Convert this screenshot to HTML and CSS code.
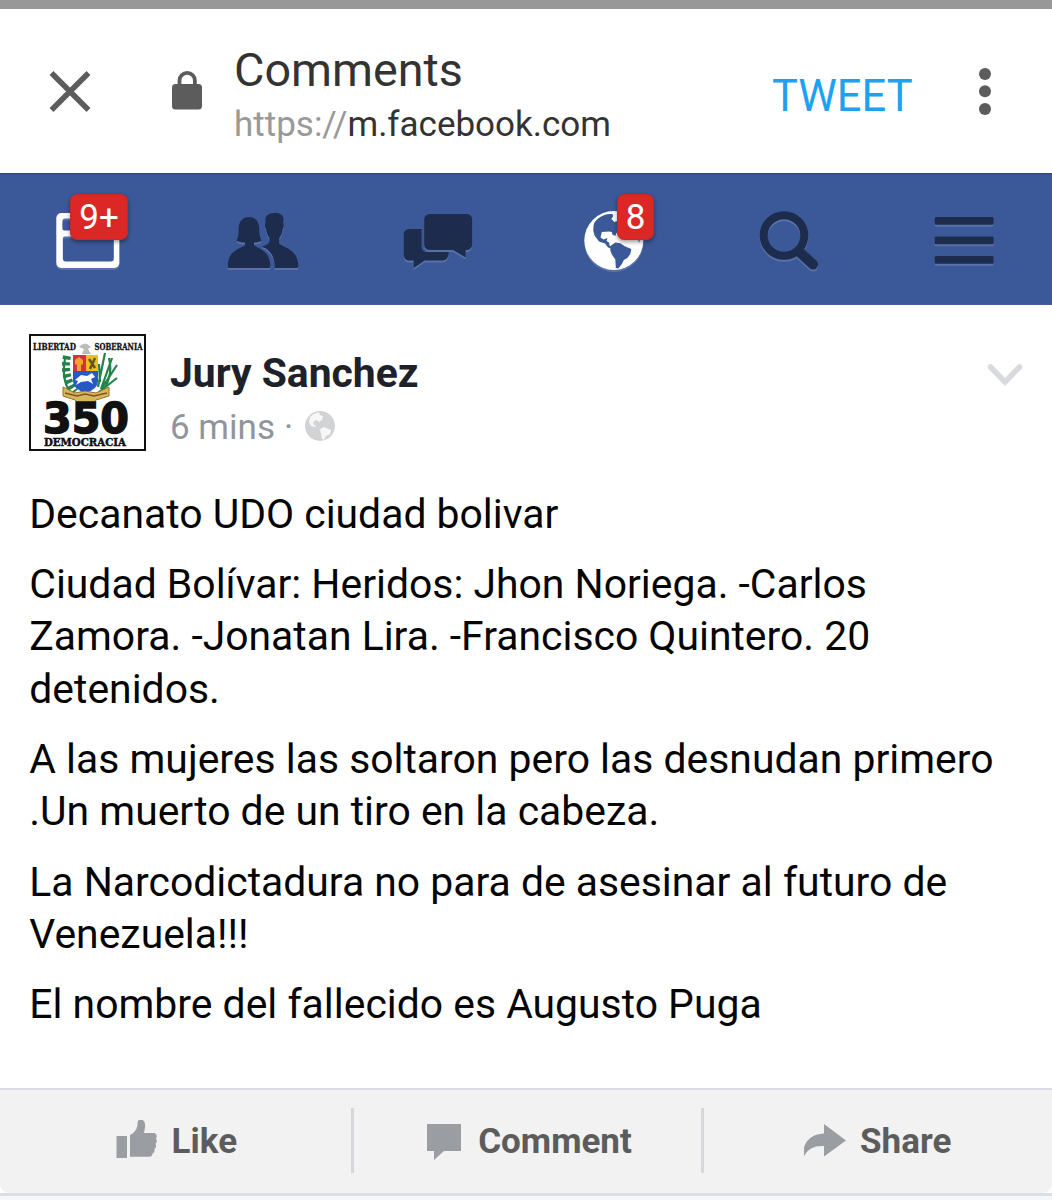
FILE: index.html
```html
<!DOCTYPE html>
<html lang="es">
<head>
<meta charset="utf-8">
<title>Comments</title>
<link rel="stylesheet" href="styles.css">
</head>
<body>
<div class="status"></div>
<header class="toolbar">
  <svg class="close" viewBox="48 69 44 44"><path d="M51.500 73L88.500 110M88.500 73L51.500 110"/></svg>
  <svg class="lock" viewBox="171 70 32 41"><path class="shackle" d="M179.500 86v-5.500a7.700 7.700 0 0 1 15.400 0V86"/><rect x="172" y="84" width="30" height="25.500" rx="3.500"/></svg>
  <div class="page-info">
    <div class="page-title">Comments</div>
    <div class="url"><span class="scheme">https://</span>m.facebook.com</div>
  </div>
  <div class="tweet">TWEET</div>
  <svg class="more" viewBox="977 66 16 50"><circle cx="985" cy="74" r="6"/><circle cx="985" cy="91.300" r="6"/><circle cx="985" cy="109" r="6"/></svg>
</header>
<nav class="tabs">
  <div class="tab">
    <svg class="icon lit" viewBox="47.670 200 80 80"><path fill-rule="evenodd" d="M61 213h53a5 5 0 0 1 5 5v45a5 5 0 0 1-5 5H61a5 5 0 0 1-5-5v-45a5 5 0 0 1 5-5zM65 218.500a3 3 0 0 0-3 3v7a2 2 0 0 0 2 2h47a2 2 0 0 0 2-2v-10zM64.500 236.500a2 2 0 0 0-2 2v20a3 3 0 0 0 3 3h45a3 3 0 0 0 3-3v-22z"/></svg>
    <span class="badge feed-badge">9+</span>
  </div>
  <div class="tab">
    <svg class="icon" viewBox="223 200 80 80"><path d="M249 217c7 0 10 5 10.300 12 .2 6 .7 9 2.200 11.500-2 1.500-4.500 2-7.500 2v2.500c2.500 3.500 16 4.500 16.300 20.500 0 2-.8 2.500-2 2.500h-38.800c-1.200 0-1.800-.6-1.700-2.500 .3-16 14.200-17 17.200-20.500v-2.500c-3.500 0-6.500-.5-8.500-2 2-3 1.800-6 2-11.500 .3-7 3.500-12 10.500-12z"/><path d="M274 213c3-.6 5 .4 6.500 1.300 3 1.700 3.500 4.700 2.800 8.200 .5 3 .8 4.500-.6 6.500-.5 5-2.500 7.500-3.500 9.500v5c3 4 18.500 5 19 21.500 .1 2-.5 3-2 3h-21.500c0-11-3.500-17.500-12.500-21.500 4-1.500 6.500-2 7.300-5.500v-3c-2-2.500-3-5.500-3.500-9-1.200-2-1.400-4.500-.5-6.500-.5-5 .5-9 8.500-9.500z"/></svg>
  </div>
  <div class="tab">
    <svg class="icon" viewBox="398.330 200 80 80"><path d="M409.500 229H422v18c0 3 2.500 5 5 5h22c.3 4-1.500 8.500-6 8.500h-18l-11 7.500v-7.500h-4.500a5.500 5.500 0 0 1-5.500-5.500v-20.500a5.500 5.500 0 0 1 5.500-5.500z"/><path d="M430 214h37a5.500 5.500 0 0 1 5.500 5.500v25a5.500 5.500 0 0 1-5.500 5.500h-1v7.500l-12.500-7.500H430a5.500 5.500 0 0 1-5.500-5.500v-25a5.500 5.500 0 0 1 5.500-5.500z"/></svg>
  </div>
  <div class="tab">
    <svg class="icon lit" viewBox="573.670 200 80 80"><circle cx="613.500" cy="240.500" r="29.500"/><g class="land"><path d="M593.300 225c1-4 5-7.500 9.700-9.500 3-1.300 6-1.700 9-1.500l1 2-2 3 3 3 3-1 2 11-3 1-1 3-3-1.500-.5-2.500-3-.5-7 .5-1.300 5.500 3 2 4-1.500-1 3 2.500 1.500 .5 3 2.500 1.500-.5 1.500-3.500-1-3-4-6-2-4.500-6-1.300-5z"/><path d="M610 246l5-3.500 5 .8 4 2.700 7 3-1 5-3 4-3.500 2-2 4-3.500 4.500-2.500-.5-.5-8.500-3.500-5-1.500-4z"/><path d="M637 238l2.500-1-.5 6z"/></g></svg>
    <span class="badge alert-badge">8</span>
  </div>
  <div class="tab">
    <svg class="icon" viewBox="749 200 80 80"><circle class="ring" cx="784" cy="235.500" r="20.300"/><path class="handle" d="M799 251.500l14 13"/></svg>
  </div>
  <div class="tab">
    <svg class="icon" viewBox="924.330 200 80 80"><rect x="935" y="217" width="59" height="7.800" rx="1.500"/><rect x="935" y="236.500" width="59" height="7.800" rx="1.500"/><rect x="935" y="256" width="59" height="7.800" rx="1.500"/></svg>
  </div>
</nav>
<article class="post">
  <div class="post-head">
    <svg class="avatar" viewBox="0 0 117 117">
      <rect x="1" y="1" width="115" height="115" fill="#fff" stroke="#111" stroke-width="2"/>
      <g fill="none" stroke="#23834a" stroke-width="2.200"><path d="M36 25c-3 15 0 29 8 36M80 24c4 15-2 29-9 36"/><path stroke-width="8" stroke-dasharray="3.500 2.500" d="M38 22c-3 15 1 28 8 36"/><path d="M72 55l11-31M69 53l7-34M73 54l15-23M70 58l18-14M71 48l-1-18"/></g>
      <path fill="#d6303a" d="M44 21h13v17H44z"/><path fill="#f1bd22" d="M57 21h12v17H57z"/><path fill="#2759c4" d="M44 37h25v10q0 8-12.500 12q-12.500-4-12.500-12z"/>
      <path fill="#f1a529" d="M46 26l4-3 4 3v4l-2 1v6h-4v-6l-2-1z"/><path d="M60 25l6 9M66 24l-5 11" stroke="#62571c" stroke-width="2.500"/>
      <path fill="#f7fbff" d="M46 46l6-5 6 1 5-3 3 4-4 2 2 5-5-3-7 1-5 3 2-4z"/>
      <path fill="#bbb" d="M50 13q6-7 12 0l-3 2 3 5h-9l2-5z"/>
      <path fill="#d7b75c" stroke="#99702d" d="M34 53l12 6 10-2 11 2 13-6v9l-13 4-3 3H49l-3-3-12-4z"/><path d="M36 59l12 3 8-2 9 2 13-3" fill="none" stroke="#805620" stroke-width="1.500"/>
      <text class="motto small" x="4" y="15.500" textLength="43" lengthAdjust="spacingAndGlyphs">LIBERTAD</text>
      <text class="motto small" x="65.500" y="15.500" textLength="48" lengthAdjust="spacingAndGlyphs">SOBERANIA</text>
      <text class="number" x="14" y="99" textLength="86" lengthAdjust="spacingAndGlyphs">350</text>
      <text class="motto" x="15" y="112" textLength="82" lengthAdjust="spacingAndGlyphs">DEMOCRACIA</text>
    </svg>
    <div class="byline">
      <div class="author">Jury Sanchez</div>
      <div class="meta"><span>6 mins</span><span class="dot">·</span><svg class="globe" viewBox="0 0 30 30"><circle cx="15" cy="15" r="15"/><path d="M5 6q4-4 9-5l1 3 3 1-1 4-3 2-2-2-3 1-1 3 3 2-1 1-4-1-2-4z"/><path d="M15 18l4-2 7 3-1 4-4 2-2 4-2-1-1-5z"/></svg></div>
    </div>
    <svg class="chevron" viewBox="986 362 38 24"><path d="M990.500 367l14.500 15 14.500-15"/></svg>
  </div>
  <div class="post-text">
    <p>Decanato UDO ciudad bolivar</p>
    <p>Ciudad Bolívar: Heridos: Jhon Noriega. -Carlos<br>Zamora. -Jonatan Lira. -Francisco Quintero. 20<br>detenidos.</p>
    <p>A las mujeres las soltaron pero las desnudan primero<br>.Un muerto de un tiro en la cabeza.</p>
    <p>La Narcodictadura no para de asesinar al futuro de<br>Venezuela!!!</p>
    <p>El nombre del fallecido es Augusto Puga</p>
  </div>
</article>
<footer class="actions-wrap">
  <div class="actions">
    <div class="action"><svg viewBox="116 1119 42 42"><path d="M116.500 1135H127v22h-10.500zM130 1134c4-2 7.500-6 7.500-11 0-3 1-4.500 3-4.500 4 0 5 4 4.500 8l-1 5.500h9.500c3 0 4 3 2.500 5.500 1.300 2 1 4-.5 5.500 1 2 .5 4-1 5 .5 2-.5 4-2 4.500 0 2-1 3.200-3 3.200H130z"/></svg><span>Like</span></div>
    <div class="action"><svg viewBox="423 1120 42 42"><path d="M428 1124h34v27h-17l-10 9v-9h-7z"/></svg><span>Comment</span></div>
    <div class="action"><svg viewBox="804 1120 42 42"><path d="M824 1124l22 16.500-22 16v-10.500c-10-.5-17 3-20.500 11.500-2-12 5-23.500 20.500-24z"/></svg><span>Share</span></div>
  </div>
</footer>
<div class="page-bottom"></div>
</body>
</html>
```
FILE: styles.css
```css
* { box-sizing: border-box; }
body {
  margin: 0;
  height: 1200px;
  overflow: hidden;
  display: flex;
  flex-direction: column;
  background: #fff;
  font-family: Roboto, sans-serif;
}
svg { display: block; flex: none; }
.status { height: 9px; background: #989898; flex: none; }
.toolbar {
  height: 164px;
  flex: none;
  display: flex;
  align-items: flex-start;
  color: #333;
}
.close { width: 44px; height: 44px; margin: 60px 79px 0 48px; fill: none; stroke: #5c5c5c; stroke-width: 5.500; }
.lock { width: 32px; height: 41px; margin-top: 61px; fill: #5c5c5c; }
.shackle { fill: none; stroke: #5c5c5c; stroke-width: 3.800; }
.page-info { padding: 33px 0 0 31px; width: 569px; white-space: nowrap; }
.page-title { font-size: 46.700px; line-height: 56px; }
.url { font-size: 35px; line-height: 54px; }
.scheme { color: #999; }
.tweet { width: 205px; padding-top: 62px; font-size: 43.500px; line-height: 52px; color: #1da1f2; }
.more { width: 16px; height: 50px; margin-top: 57px; fill: #5c5c5c; }
.tabs {
  height: 132px;
  flex: none;
  display: grid;
  grid-template-columns: repeat(6, 1fr);
  background: #3b5998;
  border-top: 2px solid #344f86;
  border-bottom: 1px solid #45609a;
}
.tab { position: relative; display: flex; justify-content: center; padding-top: 25px; }
.icon { width: 80px; height: 80px; fill: #1d2c4d; overflow: visible; filter: drop-shadow(0 2px 0 #5872a9); }
.lit { fill: #fff; }
.land { fill: #3b5998; }
.ring { fill: none; stroke: #1d2c4d; stroke-width: 8; }
.handle { fill: none; stroke: #1d2c4d; stroke-width: 10; stroke-linecap: round; }
.badge {
  position: absolute;
  top: 19px;
  height: 46px;
  border-radius: 7px;
  background: #dc2727;
  border: 1px solid #c4282f;
  box-shadow: 0 2px 4px #0006;
  color: #fff;
  font-size: 35px;
  line-height: 46px;
  text-align: center;
}
.feed-badge { left: 70px; width: 58px; }
.alert-badge { left: 91px; width: 37px; }
.post { flex: none; height: 783px; padding: 29px 29px 0; }
.post-head { display: flex; align-items: flex-start; height: 117px; }
.avatar { width: 117px; height: 117px; }
.motto { font: 900 11.500px "DejaVu Serif", serif; fill: #111; stroke: #111; stroke-width: 0.500; }
.small { font-size: 8.500px; stroke-width: 0.300; }
.number { font: 900 42px "DejaVu Sans", sans-serif; fill: #111; stroke: #111; stroke-width: 1.500; }
.byline { flex: 1; padding: 14px 0 0 24px; }
.author { font-size: 40.850px; line-height: 50px; font-weight: 700; color: #1d2129; }
.meta { display: flex; align-items: center; height: 58px; color: #90949c; font-size: 35px; }
.dot { margin: 0 12px 0 9px; }
.globe { width: 30px; height: 30px; margin-bottom: 2px; fill: #d2d3d5; }
.globe path { fill: #f7f7f7; }
.chevron { width: 38px; height: 24px; margin: 28px -1px 0 0; fill: none; stroke: #d8dadd; stroke-width: 5.500; stroke-linecap: round; overflow: visible; }
.post-text { padding: 36.500px 0 0 0.300px; font-size: 40.880px; line-height: 52.600px; color: #050505; white-space: nowrap; }
.post-text p { margin: 0 0 17.500px; }
.actions-wrap { flex: none; height: 108px; border-top: 2px solid #dadce1; border-bottom: 3px solid #dcdee2; }
.actions { height: 103px; display: grid; grid-template-columns: repeat(3, 1fr); background: #f2f2f2; border-radius: 0 0 9px 9px; }
.action { position: relative; display: flex; justify-content: center; align-items: center; padding: 0 0 1px 2px; font-size: 35px; font-weight: 700; color: #5c5c5c; gap: 14px; }
.action svg { width: 42px; height: 42px; fill: #9a9ea3; }
.action + .action::before { content: ""; position: absolute; left: 0; top: 18px; width: 3px; height: 65px; background: #d5d7da; }
.page-bottom { flex: 1; background: #f6f7f9; }
```
